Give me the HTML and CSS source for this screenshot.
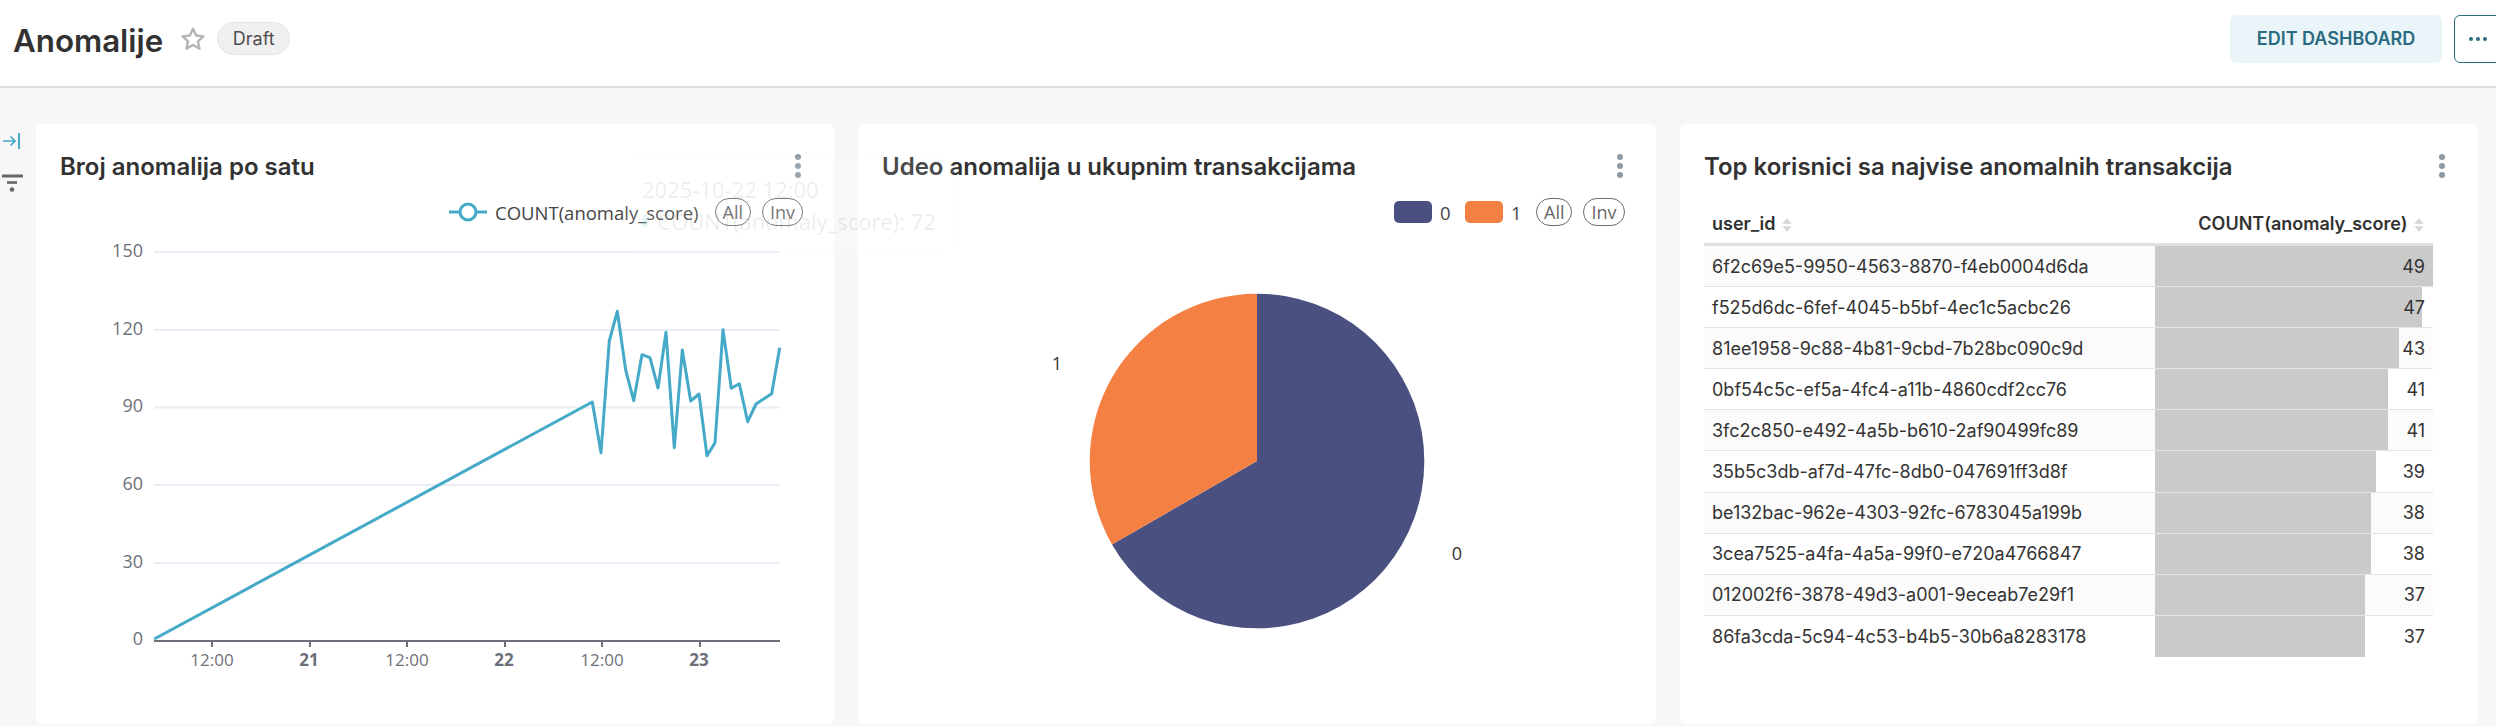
FILE: index.html
```html
<!DOCTYPE html>
<html lang="sr">
<head>
<meta charset="utf-8">
<title>Anomalije</title>
<link rel="stylesheet" href="styles.css">
</head>
<body>
<header class="topbar">
  <div class="title-group">
    <h1 class="page-title">Anomalije</h1>
    <svg class="star" viewBox="0 0 24 24" width="26" height="26"><path d="M12 2.6l2.9 6.2 6.7.8-5 4.6 1.4 6.7-6-3.4-6 3.4 1.4-6.7-5-4.6 6.7-.8z" fill="none" stroke="#b4b4b4" stroke-width="2.2" stroke-linejoin="round"/></svg>
    <span class="draft">Draft</span>
  </div>
  <div class="actions">
    <button class="btn-edit">EDIT DASHBOARD</button>
    <button class="btn-more"><svg viewBox="0 0 20 6" width="20" height="6"><circle cx="3" cy="3" r="2" fill="#2b6a80"/><circle cx="10" cy="3" r="2" fill="#2b6a80"/><circle cx="17" cy="3" r="2" fill="#2b6a80"/></svg></button>
  </div>
</header>
<main class="main">
  <aside class="rail">
    <svg viewBox="0 0 20 18" width="20" height="18"><path d="M3 9h12M10.5 4.5L15 9l-4.500 4.500" fill="none" stroke="#45a9c8" stroke-width="1.700"/><path d="M19 1v16" stroke="#45a9c8" stroke-width="2"/></svg>
    <svg class="rail-filter" viewBox="0 0 24 18" width="24" height="18"><path d="M2 2h21" stroke="#666" stroke-width="3"/><path d="M7 8.500h10" stroke="#666" stroke-width="2.600"/><circle cx="12" cy="15.500" r="2.300" fill="#666"/></svg>
  </aside>
  <section class="grid">
    <article class="card">
      <div class="card-head">
        <h2 class="card-title">Broj anomalija po satu</h2>
        <svg class="kebab" viewBox="0 0 6 24" width="6" height="24"><circle cx="3" cy="3" r="3"/><circle cx="3" cy="12" r="3"/><circle cx="3" cy="21" r="3"/></svg>
      </div>
      <div class="legend legend-line">
        <svg viewBox="0 0 38 20" width="38" height="20"><path d="M0 10h38" stroke="#45a9c8" stroke-width="3"/><circle cx="19" cy="10" r="8" fill="#fff" stroke="#45a9c8" stroke-width="3"/></svg>
        <span class="legend-text">COUNT(anomaly_score)</span>
        <span class="pill pill-first">All</span>
        <span class="pill">Inv</span>
      </div>
      <svg class="chart" viewBox="36 228 798 496" width="798" height="496">
        <g stroke="#e9edf6" stroke-width="2">
          <path d="M154 252H780"/><path d="M154 330H780"/><path d="M154 407.500H780"/><path d="M154 485H780"/><path d="M154 563H780"/>
        </g>
        <g class="y-labels" text-anchor="end">
          <text x="143" y="249.500">150</text><text x="143" y="327.500">120</text><text x="143" y="405">90</text><text x="143" y="482.500">60</text><text x="143" y="560.500">30</text><text x="143" y="638">0</text>
        </g>
        <path d="M154 641H780M212 641v6M310 641v6M407 641v6M505 641v6M602 641v6M700 641v6" stroke="#6e7079" stroke-width="2" fill="none"/>
        <g class="x-labels" text-anchor="middle">
          <text x="212" y="659">12:00</text><text class="bold" x="309" y="659">21</text><text x="407" y="659">12:00</text><text class="bold" x="504" y="659">22</text><text x="602" y="659">12:00</text><text class="bold" x="699" y="659">23</text>
        </g>
        <polyline fill="none" stroke="#45a9c8" stroke-width="3" stroke-linejoin="round" points="154.300,639 592.300,402 601,452.700 609.300,341 617.300,311.300 625.700,370 633.700,400.700 642,354.700 650,357.700 658,388 666,332.300 674.300,447.700 682.300,350 690.700,401 699,394 707,455.700 715,442.700 723,329.700 731.300,388.300 739.300,383.700 747.700,421.700 756,404 771.700,393.700 779.700,347.700"/>
      </svg>
    </article>
    <article class="card">
      <div class="card-head">
        <h2 class="card-title">Udeo anomalija u ukupnim transakcijama</h2>
        <svg class="kebab" viewBox="0 0 6 24" width="6" height="24"><circle cx="3" cy="3" r="3"/><circle cx="3" cy="12" r="3"/><circle cx="3" cy="21" r="3"/></svg>
      </div>
      <div class="legend legend-pie">
        <span class="swatch swatch-navy"></span><span class="legend-text">0</span>
        <span class="swatch swatch-orange"></span><span class="legend-text">1</span>
        <span class="pill pill-first">All</span>
        <span class="pill">Inv</span>
      </div>
      <svg class="chart" viewBox="858 228 798 496" width="798" height="496">
        <path d="M1257 461L1257 293.700A167.300 167.300 0 1 1 1112 544.400Z" fill="#4a507f"/>
        <path d="M1257 461L1112 544.400A167.300 167.300 0 0 1 1257 293.700Z" fill="#f48044"/>
        <text class="pie-label" x="1057" y="363" text-anchor="middle">1</text>
        <text class="pie-label" x="1457" y="553" text-anchor="middle">0</text>
      </svg>
    </article>
    <article class="card">
      <div class="card-head">
        <h2 class="card-title">Top korisnici sa najvise anomalnih transakcija</h2>
        <svg class="kebab" viewBox="0 0 6 24" width="6" height="24"><circle cx="3" cy="3" r="3"/><circle cx="3" cy="12" r="3"/><circle cx="3" cy="21" r="3"/></svg>
      </div>
      <table class="table">
        <colgroup><col class="col-id"><col class="col-count"></colgroup>
        <thead>
          <tr>
            <th class="th-id">user_id <svg class="sort" viewBox="0 0 10 14" width="12" height="16"><path d="M5 1l4 5H1zM5 13l4-5H1z" fill="#d4d4d4"/></svg></th>
            <th class="th-count">COUNT(anomaly_score) <svg class="sort" viewBox="0 0 10 14" width="12" height="16"><path d="M5 1l4 5H1zM5 13l4-5H1z" fill="#d4d4d4"/></svg></th>
          </tr>
        </thead>
        <tbody>
          <tr><td>6f2c69e5-9950-4563-8870-f4eb0004d6da</td><td class="num"><div class="bar" style="width:100%"></div><span class="val">49</span></td></tr>
          <tr><td>f525d6dc-6fef-4045-b5bf-4ec1c5acbc26</td><td class="num"><div class="bar" style="width:95.900%"></div><span class="val">47</span></td></tr>
          <tr><td>81ee1958-9c88-4b81-9cbd-7b28bc090c9d</td><td class="num"><div class="bar" style="width:87.800%"></div><span class="val">43</span></td></tr>
          <tr><td>0bf54c5c-ef5a-4fc4-a11b-4860cdf2cc76</td><td class="num"><div class="bar" style="width:83.700%"></div><span class="val">41</span></td></tr>
          <tr><td>3fc2c850-e492-4a5b-b610-2af90499fc89</td><td class="num"><div class="bar" style="width:83.700%"></div><span class="val">41</span></td></tr>
          <tr><td>35b5c3db-af7d-47fc-8db0-047691ff3d8f</td><td class="num"><div class="bar" style="width:79.600%"></div><span class="val">39</span></td></tr>
          <tr><td>be132bac-962e-4303-92fc-6783045a199b</td><td class="num"><div class="bar" style="width:77.600%"></div><span class="val">38</span></td></tr>
          <tr><td>3cea7525-a4fa-4a5a-99f0-e720a4766847</td><td class="num"><div class="bar" style="width:77.600%"></div><span class="val">38</span></td></tr>
          <tr><td>012002f6-3878-49d3-a001-9eceab7e29f1</td><td class="num"><div class="bar" style="width:75.500%"></div><span class="val">37</span></td></tr>
          <tr><td>86fa3cda-5c94-4c53-b4b5-30b6a8283178</td><td class="num"><div class="bar" style="width:75.500%"></div><span class="val">37</span></td></tr>
        </tbody>
      </table>
    </article>
  </section>
  <div class="ghost-tip">
    <div class="ghost-time">2025-10-22 12:00</div>
    <div class="ghost-row"><span class="ghost-dot"></span><span>COUNT(anomaly_score): 72</span></div>
  </div>
</main>
</body>
</html>
```
FILE: styles.css
```css
* { box-sizing: border-box; }
html, body { margin: 0; padding: 0; }
body {
  width: 2496px;
  height: 726px;
  overflow: hidden;
  background: #f7f7f7;
  font-family: Inter, "Liberation Sans", sans-serif;
  color: #323232;
}
.topbar {
  height: 88px;
  background: #fff;
  border-bottom: 2px solid #e0e0e0;
  display: flex;
  align-items: center;
  justify-content: space-between;
  padding-left: 13px;
  padding-bottom: 9px;
}
.title-group { display: flex; align-items: center; }
.page-title {
  margin: 2px 0 -2px;
  font-size: 31.300px;
  line-height: 36px;
  font-weight: 600;
  color: #323232;
}
.star { margin-left: 17px; }
.draft {
  margin-left: 11px;
  height: 33px;
  width: 73px;
  display: flex;
  align-items: center;
  justify-content: center;
  border-radius: 17px;
  background: #f0f0f0;
  border: 1px solid #e4e4e4;
  font-size: 18px;
  color: #4d4d4d;
}
.actions { display: flex; align-items: center; gap: 12px; margin-right: -6px; }
.btn-edit {
  width: 212px;
  height: 48px;
  border: 0;
  border-radius: 6px;
  background: #e9f5f8;
  color: #2b6a80;
  font-family: Inter, "Liberation Sans", sans-serif;
  font-size: 18px;
  font-weight: 600;
  padding: 0;
}
.btn-more {
  width: 48px;
  height: 48px;
  flex: none;
  padding: 0;
  background: #fff;
  border: 1.500px solid #2b6a80;
  border-radius: 6px;
  display: flex;
  align-items: center;
  justify-content: center;
}
.main {
  position: relative;
  display: flex;
  height: 638px;
  padding-top: 36px;
}
.rail {
  width: 36px;
  flex: none;
  display: flex;
  flex-direction: column;
  align-items: flex-start;
  padding-top: 8px;
}
.rail-filter { margin-top: 24px; }
.grid {
  display: grid;
  grid-template-columns: repeat(3, 798px);
  column-gap: 24px;
}
.card {
  width: 798px;
  height: 600px;
  background: #fff;
  border-radius: 6px;
}
.card-head {
  height: 72px;
  display: flex;
  align-items: flex-start;
  justify-content: space-between;
  padding: 22px 33px 0 24px;
}
.card-title {
  margin: 0;
  font-size: 24px;
  line-height: 42px;
  font-weight: 600;
  color: #323232;
}
.kebab { fill: #8d99a3; margin-top: 8px; }
.legend {
  height: 32px;
  display: flex;
  align-items: center;
  font-family: "Open Sans", "Liberation Sans", sans-serif;
  font-size: 18.500px;
  color: #444;
}
.legend-line { padding-left: 413px; }
.legend-line .legend-text { margin-left: 8px; }
.legend-pie { padding-left: 536px; }
.legend-pie .legend-text { margin-left: 8px; width: 25px; }
.swatch { width: 38px; height: 22px; border-radius: 5px; }
.swatch-navy { background: #4a507f; }
.swatch-orange { background: #f48044; }
.pill {
  height: 28px;
  padding: 0 7px;
  margin-left: 11px;
  display: flex;
  align-items: center;
  border: 1.500px solid #6b6b6b;
  border-radius: 14px;
  color: #666;
  font-size: 18px;
}
.legend-line .pill-first { margin-left: 16px; }
.legend-pie .pill-first { margin-left: 0; }
.chart { display: block; }
.chart text {
  font-family: "Open Sans", "Liberation Sans", sans-serif;
  dominant-baseline: central;
}
.y-labels text { font-size: 18px; fill: #6e7079; }
.x-labels text { font-size: 17px; fill: #6e7079; }
.x-labels .bold { font-weight: 700; }
.pie-label { font-size: 18px; fill: #333; }
.table {
  width: 729px;
  margin-left: 24px;
  table-layout: fixed;
  border-collapse: separate;
  border-spacing: 0;
  font-size: 18px;
}
.col-id { width: 450.500px; }
.col-count { width: 278.500px; }
.table th {
  height: 50px;
  padding: 7px 8px 0;
  border-bottom: 3px solid #e0e0e0;
  font-weight: 600;
  font-size: 18px;
  color: #323232;
}
.th-id { text-align: left; }
.th-count { text-align: right; }
.sort { vertical-align: -3px; margin-left: 1px; }
.table td {
  height: 41.100px;
  padding: 0 8px;
  border-bottom: 1px solid #e4e4e4;
  color: #333;
}
.table tbody tr:nth-child(odd) td { background: #fbfbfb; }
.table tbody tr:last-child td { border-bottom: 0; }
.table td.num { position: relative; text-align: right; padding: 0; }
.bar {
  position: absolute;
  left: 0;
  top: 0;
  bottom: 0;
  background: #cacaca;
}
.val { position: relative; padding-right: 8px; }
.ghost-tip {
  position: absolute;
  left: 625px;
  top: 69px;
  width: 328px;
  height: 96px;
  padding: 17px 17px;
  background: rgba(255, 255, 255, 0.12);
  box-shadow: 0 0 8px rgba(0, 0, 0, 0.012);
  font-family: "Open Sans", "Liberation Sans", sans-serif;
  color: rgba(102, 102, 102, 0.12);
  font-size: 22px;
  white-space: nowrap;
}
.ghost-time { line-height: 30px; }
.ghost-row { display: flex; align-items: center; gap: 8px; line-height: 30px; margin-top: 2px; }
.ghost-dot { width: 14px; height: 14px; border-radius: 50%; background: rgba(69, 169, 200, 0.12); }
```
